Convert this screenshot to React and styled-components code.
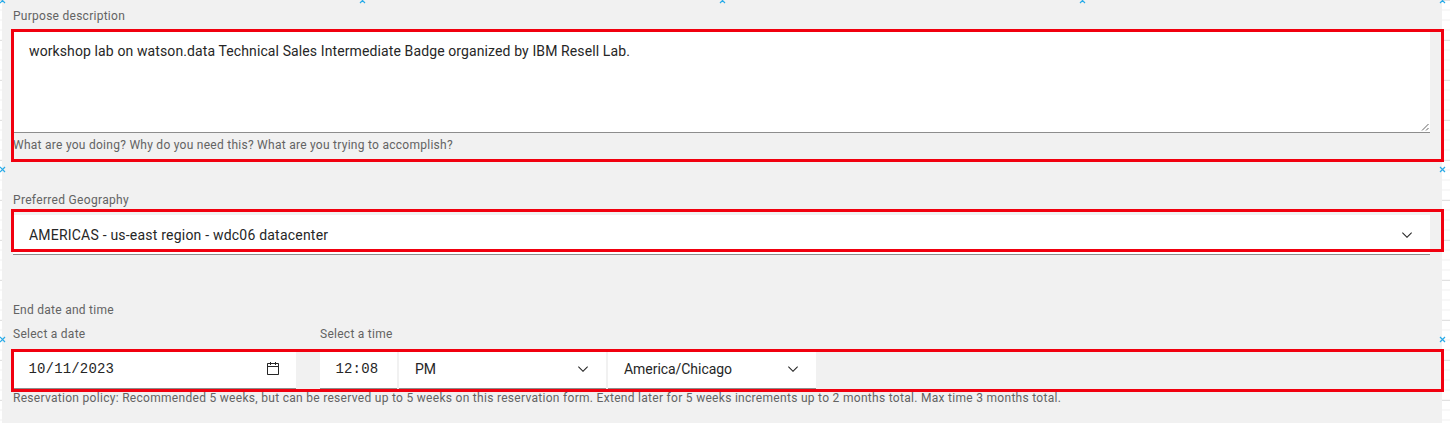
import React from "react";
import styled, { createGlobalStyle } from "styled-components";

const GlobalStyle = createGlobalStyle`
  * { box-sizing: border-box; }
  body {
    margin: 0;
    background: #fff;
    font-family: Roboto, "Liberation Sans", sans-serif;
  }
`;

const Canvas = styled.div`
  position: relative;
  height: 423px;
  overflow: hidden;
  padding: 0 8px 0 2px;
  background-color: #fff;
  background-image:
    linear-gradient(#e1e1e1 1px, transparent 1px),
    linear-gradient(#f8f8f8 1px, transparent 1px 9px, #f8f8f8 9px);
  background-size: 100% 40px, 100% 10px;
`;

const Form = styled.form`
  height: 423px;
  padding: 7px 12px 0 11px;
  background: #f1f1f1;
  display: flex;
  flex-direction: column;
`;

const Caption = styled.div`
  height: 16px;
  padding-top: 1px;
  font-size: 12px;
  line-height: 16px;
  letter-spacing: ${(p) => p.$track || 0.265}px;
  color: #636363;
  white-space: nowrap;
`;

const PurposeField = styled.div`
  display: flex;
  flex-direction: column;
  height: 184px;
`;

const PurposeBox = styled.div`
  display: flex;
  justify-content: space-between;
  height: 102px;
  margin: 8px 0 3px;
  padding: 11px 0 0 16px;
  border-bottom: 1px solid #8d8d8d;
  background: #fff;
`;

const Value = styled.span`
  font-size: 14px;
  line-height: 18px;
  letter-spacing: ${(p) => p.$track || 0}px;
  color: #262626;
  white-space: nowrap;
`;

const ResizeGrip = styled.svg`
  align-self: flex-end;
  width: 9px;
  height: 9px;
`;

const GeographyField = styled.div`
  display: flex;
  flex-direction: column;
  height: 110px;
`;

const GeographySelect = styled.div`
  display: flex;
  align-items: center;
  justify-content: space-between;
  height: 40px;
  margin-top: 8px;
  padding: 0 15.5px 0 16px;
  border-bottom: 1px solid #8d8d8d;
  background: #fff;
`;

const Fields = styled.div`
  display: flex;
  margin-top: 8px;
`;

const DateColumn = styled.div`
  width: 283px;
  margin-right: 24px;
`;

const TimeColumn = styled.div`
  width: 496px;
`;

const Controls = styled.div`
  display: flex;
  gap: 2px;
  margin-top: 8px;
`;

const Control = styled.div`
  display: flex;
  align-items: center;
  justify-content: space-between;
  width: ${(p) => p.$width}px;
  height: 40px;
  padding: 0 15.5px 0 16px;
  border-bottom: 1px solid #8d8d8d;
  background: #fff;
`;

const Digits = styled(Value)`
  margin-left: -0.5px;
  font-family: "Liberation Mono", monospace;
  letter-spacing: 0.16px;
`;

const Icon = styled.svg`
  flex: none;
  width: 16px;
  height: 16px;
  fill: #262626;
`;

const Highlight = styled.div`
  position: absolute;
  left: 11px;
  top: ${(p) => p.$top}px;
  width: 1433px;
  height: ${(p) => p.$height}px;
  border: 3px solid #f1000f;
`;

const Handle = styled.svg`
  position: absolute;
  left: ${(p) => p.$x - 2}px;
  top: ${(p) => p.$y - 2}px;
  width: 5px;
  height: 5px;
  overflow: visible;
`;

const Chevron = () => (
  <Icon viewBox="0 0 16 16">
    <path d="M8 11 3 6l.7-.7L8 9.6l4.3-4.3.7.7z" />
  </Icon>
);

const Calendar = () => (
  <Icon viewBox="0 0 32 32">
    <path d="M26 4h-4V2h-2v2h-8V2h-2v2H6C4.9 4 4 4.9 4 6v20c0 1.1.9 2 2 2h20c1.1 0 2-.9 2-2V6c0-1.1-.9-2-2-2zm0 22H6V12h20v14zm0-16H6V6h4v2h2V6h8v2h2V6h4v4z" />
  </Icon>
);

const handles = [
  [2, 0], [362, 0], [722, 0], [1082, 0], [1442, 0],
  [2, 169], [1442, 169], [2, 339], [1442, 339],
];

const highlights = [[29, 133], [209, 43], [349, 43]];

export default function App() {
  return (
    <>
      <GlobalStyle />
      <Canvas>
        <Form>
          <PurposeField>
            <Caption>Purpose description</Caption>
            <PurposeBox>
              <Value $track={0.11}>
                workshop lab on watson.data Technical Sales Intermediate Badge organized by IBM Resell Lab.
              </Value>
              <ResizeGrip viewBox="0 0 9 9">
                <path d="M1 7.5 7.5 1M5 7.5 7.5 5" fill="none" stroke="#666" />
              </ResizeGrip>
            </PurposeBox>
            <Caption>What are you doing? Why do you need this? What are you trying to accomplish?</Caption>
          </PurposeField>
          <GeographyField>
            <Caption $track={0.32}>Preferred Geography</Caption>
            <GeographySelect>
              <Value $track={0.21}>AMERICAS - us-east region - wdc06 datacenter</Value>
              <Chevron />
            </GeographySelect>
          </GeographyField>
          <Caption>End date and time</Caption>
          <Fields>
            <DateColumn>
              <Caption>Select a date</Caption>
              <Controls>
                <Control $width={283}>
                  <Digits>10/11/2023</Digits>
                  <Calendar />
                </Control>
              </Controls>
            </DateColumn>
            <TimeColumn>
              <Caption>Select a time</Caption>
              <Controls>
                <Control $width={77}>
                  <Digits>12:08</Digits>
                </Control>
                <Control $width={207}>
                  <Value>PM</Value>
                  <Chevron />
                </Control>
                <Control $width={208}>
                  <Value $track={-0.05}>America/Chicago</Value>
                  <Chevron />
                </Control>
              </Controls>
            </TimeColumn>
          </Fields>
          <Caption $track={0.294}>
            Reservation policy: Recommended 5 weeks, but can be reserved up to 5 weeks on this reservation form. Extend later for 5 weeks increments up to 2 months total. Max time 3 months total.
          </Caption>
        </Form>
        {highlights.map(([top, height]) => (
          <Highlight key={top} $top={top} $height={height} />
        ))}
        {handles.map(([x, y]) => (
          <Handle key={`${x}-${y}`} $x={x} $y={y} viewBox="0 0 5 5">
            <path d="M0 0 5 5M5 0 0 5" stroke="#29abe8" strokeWidth="1.2" />
          </Handle>
        ))}
      </Canvas>
    </>
  );
}
